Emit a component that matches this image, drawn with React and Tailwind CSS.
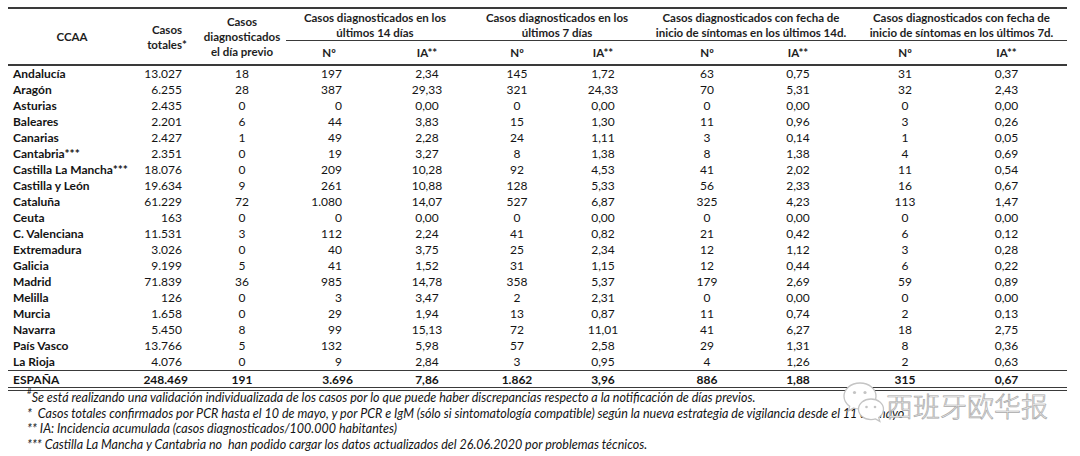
import React from "react";

const GRID =
  "grid grid-cols-[128px_62px_88px_86px_110px_70px_102px_106px_76px_138px_93px]";

const rows = [
  ["Andalucía", "13.027", "18", "197", "2,34", "145", "1,72", "63", "0,75", "31", "0,37"],
  ["Aragón", "6.255", "28", "387", "29,33", "321", "24,33", "70", "5,31", "32", "2,43"],
  ["Asturias", "2.435", "0", "0", "0,00", "0", "0,00", "0", "0,00", "0", "0,00"],
  ["Baleares", "2.201", "6", "44", "3,83", "15", "1,30", "11", "0,96", "3", "0,26"],
  ["Canarias", "2.427", "1", "49", "2,28", "24", "1,11", "3", "0,14", "1", "0,05"],
  ["Cantabria***", "2.351", "0", "19", "3,27", "8", "1,38", "8", "1,38", "4", "0,69"],
  ["Castilla La Mancha***", "18.076", "0", "209", "10,28", "92", "4,53", "41", "2,02", "11", "0,54"],
  ["Castilla y León", "19.634", "9", "261", "10,88", "128", "5,33", "56", "2,33", "16", "0,67"],
  ["Cataluña", "61.229", "72", "1.080", "14,07", "527", "6,87", "325", "4,23", "113", "1,47"],
  ["Ceuta", "163", "0", "0", "0,00", "0", "0,00", "0", "0,00", "0", "0,00"],
  ["C. Valenciana", "11.531", "3", "112", "2,24", "41", "0,82", "21", "0,42", "6", "0,12"],
  ["Extremadura", "3.026", "0", "40", "3,75", "25", "2,34", "12", "1,12", "3", "0,28"],
  ["Galicia", "9.199", "5", "41", "1,52", "31", "1,15", "12", "0,44", "6", "0,22"],
  ["Madrid", "71.839", "36", "985", "14,78", "358", "5,37", "179", "2,69", "59", "0,89"],
  ["Melilla", "126", "0", "3", "3,47", "2", "2,31", "0", "0,00", "0", "0,00"],
  ["Murcia", "1.658", "0", "29", "1,94", "13", "0,87", "11", "0,74", "2", "0,13"],
  ["Navarra", "5.450", "8", "99", "15,13", "72", "11,01", "41", "6,27", "18", "2,75"],
  ["País Vasco", "13.766", "5", "132", "5,98", "57", "2,58", "29", "1,31", "8", "0,36"],
  ["La Rioja", "4.076", "0", "9", "2,84", "3", "0,95", "4", "1,26", "2", "0,63"],
];

const total = ["ESPAÑA", "248.469", "191", "3.696", "7,86", "1.862", "3,96", "886", "1,88", "315", "0,67"];

const dataCls = [
  "pl-[5px] text-left font-bold whitespace-nowrap",
  "text-right pr-[16px]",
  "text-center",
  "text-right pr-[30px]",
  "text-center",
  "text-center",
  "text-center",
  "text-center",
  "text-center",
  "text-center",
  "text-center pr-[28px]",
];

const totalCls = [
  "pl-[5px] text-left",
  "text-right pr-[10px]",
  "text-center",
  "text-right pr-[19px]",
  "text-center",
  "text-center",
  "text-center",
  "text-center",
  "text-center",
  "text-center",
  "text-center pr-[28px]",
];

function Group({ lines, cls }) {
  return (
    <div className={"col-span-2 border-b border-[#3a3a3a] flex flex-col items-center justify-center leading-[15px] whitespace-nowrap " + cls}>
      {lines.map((l, i) => (
        <span key={i}>{l}</span>
      ))}
    </div>
  );
}

function Sub({ text, cls = "" }) {
  return <div className={"flex items-center justify-center " + cls}>{text}</div>;
}

function WeChat() {
  return (
    <svg width="44" height="46" viewBox="0 0 44 46" fill="none">
      <path
        d="M18 3C8.6 3 2 9.2 2 16.3c0 4.1 2.2 7.6 5.7 10l-1.4 4.6 5.3-2.9c2 .6 4.1.9 6.4.9 9.4 0 16-6.2 16-12.6C34 9.2 27.4 3 18 3z"
        fill="#ffffff"
        stroke="#c4c4c4"
        strokeWidth="1.3"
      />
      <circle cx="12.5" cy="12.5" r="1.6" fill="#c4c4c4" />
      <circle cx="23" cy="12.5" r="1.6" fill="#c4c4c4" />
      <path
        d="M29 19c-7.2 0-12.5 4.7-12.5 10.3 0 5.6 5.3 10.3 12.5 10.3 1.6 0 3.1-.2 4.5-.7l4.3 2.4-1.1-3.8c2.9-1.9 4.8-4.8 4.8-8.2C41.5 23.7 36.2 19 29 19z"
        fill="#ffffff"
        stroke="#c4c4c4"
        strokeWidth="1.3"
      />
      <circle cx="24.5" cy="27" r="1.3" fill="#c4c4c4" />
      <circle cx="33" cy="27" r="1.3" fill="#c4c4c4" />
    </svg>
  );
}

export default function App() {
  return (
    <div className="relative w-[1080px] h-[456px] overflow-hidden bg-white font-['Lato','Liberation_Sans',sans-serif] text-[12px] text-[#141414]">
      <div className="ml-[8px] pt-[7px] w-[1059px]">
        {/* Header */}
        <div className={GRID + " grid-rows-[32px_23px] border-t-2 border-b-2 border-[#3a3a3a] font-bold text-[11.5px] text-[#1e1e1e]"}>
          <div className="row-span-2 flex items-center justify-center">CCAA</div>
          <div className="row-span-2 flex flex-col items-center justify-center leading-[15px] pt-[1px]">
            <span>Casos</span>
            <span>totales*</span>
          </div>
          <div className="row-span-2 flex flex-col items-center justify-center leading-[15px] whitespace-nowrap">
            <span>Casos</span>
            <span>diagnosticados</span>
            <span>el día previo</span>
          </div>
          <Group lines={["Casos diagnosticados en los", "últimos 14 días"]} cls="pr-[18px]" />
          <Group lines={["Casos diagnosticados en los", "últimos 7 días"]} cls="pr-[22px]" />
          <Group lines={["Casos diagnosticados con fecha de", "inicio de síntomas en los últimos 14d."]} cls="pl-[12px]" />
          <Group lines={["Casos diagnosticados con fecha de", "inicio de síntomas en los últimos 7d."]} cls="pl-[20px]" />
          <Sub text="Nº" />
          <Sub text="IA**" />
          <Sub text="Nº" />
          <Sub text="IA**" />
          <Sub text="Nº" />
          <Sub text="IA**" />
          <Sub text="Nº" />
          <Sub text="IA**" cls="pr-[28px]" />
        </div>

        {/* Body */}
        <div>
          {rows.map((r, i) => (
            <div key={i} className={GRID + " h-[16px] leading-[16px]"}>
              {r.map((v, j) => (
                <div key={j} className={dataCls[j]}>
                  {v}
                </div>
              ))}
            </div>
          ))}
        </div>

        {/* Total */}
        <div className={GRID + " h-[17px] leading-[17px] border-t border-[#3a3a3a] font-bold"}>
          {total.map((v, j) => (
            <div key={j} className={totalCls[j]}>
              {v}
            </div>
          ))}
        </div>
        <div className="h-[4px] border-y border-[#3a3a3a]" />

        {/* Footnotes */}
        <div className="pl-[19px] italic text-[12.5px] leading-[15.5px] -mt-[1px] text-[#141414] whitespace-nowrap">
          <div>
            <sup className="text-[8px] not-italic align-top relative top-[1px]">#</sup>
            Se está realizando una validación individualizada de los casos por lo que puede haber discrepancias respecto a la notificación de días previos.
          </div>
          <div>*&nbsp; Casos totales confirmados por PCR hasta el 10 de mayo, y por PCR e IgM (sólo si sintomatología compatible) según la nueva estrategia de vigilancia desde el 11 de mayo</div>
          <div>** IA: Incidencia acumulada (casos diagnosticados/100.000 habitantes)</div>
          <div>*** Castilla La Mancha y Cantabria no&nbsp; han podido cargar los datos actualizados del 26.06.2020 por problemas técnicos.</div>
        </div>
      </div>

      {/* Watermark */}
      <div className="absolute left-[842px] top-[380px] flex items-center">
        <WeChat />
        <span className="font-['Noto_Sans_CJK_SC',sans-serif] font-light text-[27px] leading-none text-[#f2f2f2] [-webkit-text-stroke:0.7px_#a9a9a9] mt-[4px]">
          西班牙欧华报
        </span>
      </div>
    </div>
  );
}
